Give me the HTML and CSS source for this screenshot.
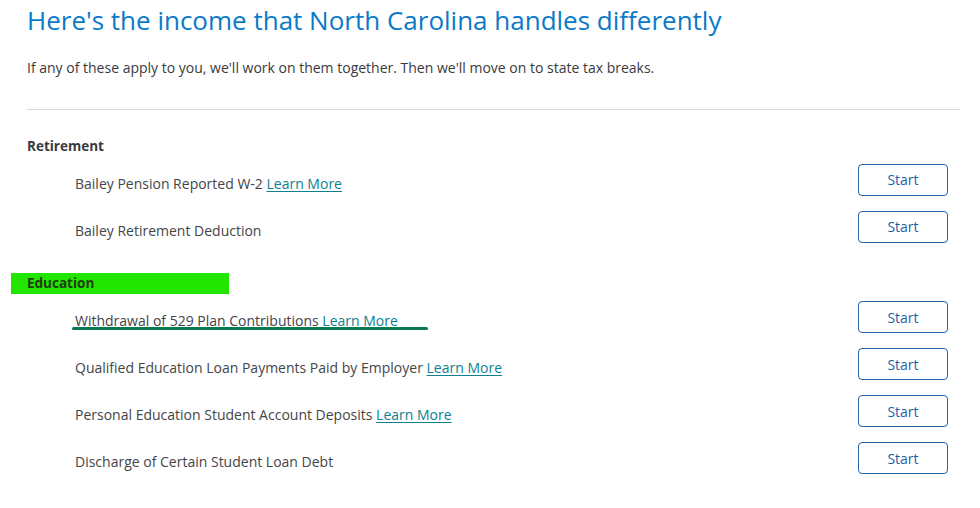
FILE: index.html
```html
<!DOCTYPE html>
<html lang="en">
<head>
<meta charset="utf-8">
<title>North Carolina income</title>
<link rel="stylesheet" href="styles.css">
</head>
<body>
<main class="page">
  <h1 class="title">Here's the income that North Carolina handles differently</h1>
  <p class="intro">If any of these apply to you, we'll work on them together. Then we'll move on to state tax breaks.</p>
  <hr class="rule">

  <section class="group">
    <h2 class="group-title">Retirement</h2>
    <div class="row">
      <span class="label">Bailey Pension Reported W-2 <a class="learn" href="#">Learn More</a></span>
      <button class="start">Start</button>
    </div>
    <div class="row">
      <span class="label">Bailey Retirement Deduction</span>
      <button class="start">Start</button>
    </div>
  </section>

  <section class="group">
    <h2 class="group-title highlight">Education</h2>
    <div class="row">
      <span class="label marked">Withdrawal of 529 Plan Contributions <a class="learn plain" href="#">Learn More</a></span>
      <button class="start">Start</button>
    </div>
    <div class="row">
      <span class="label">Qualified Education Loan Payments Paid by Employer <a class="learn" href="#">Learn More</a></span>
      <button class="start">Start</button>
    </div>
    <div class="row">
      <span class="label">Personal Education Student Account Deposits <a class="learn" href="#">Learn More</a></span>
      <button class="start">Start</button>
    </div>
    <div class="row">
      <span class="label">Discharge of Certain Student Loan Debt</span>
      <button class="start">Start</button>
    </div>
  </section>
</main>
</body>
</html>
```

FILE: styles.css
```css
html, body {
  margin: 0;
  padding: 0;
  background: #ffffff;
  overflow: hidden;
}

body {
  font-family: "Open Sans", "Liberation Sans", sans-serif;
  color: #393a3d;
}

.page {
  width: 933px;
  padding: 3px 0 0 27px;
}

.title {
  margin: 0;
  font-size: 26px;
  line-height: 34px;
  font-weight: 400;
  color: #0a7ac8;
}

.intro {
  margin: 21px 0 0;
  font-size: 14px;
  line-height: 20px;
  color: #393a3d;
}

.rule {
  margin: 31px 0 0;
  border: 0;
  border-top: 1px solid #d4d7dc;
  height: 0;
}

.group {
  margin-top: 25px;
}

.group + .group {
  margin-top: 22.5px;
}

.group-title {
  margin: 0;
  padding: 2px 0 1px;
  font-size: 13.5px;
  line-height: 18px;
  font-weight: 700;
  color: #393a3d;
}

.highlight {
  width: 202px;
  margin-left: -16px;
  padding: 1px 0 1px 16px;
  line-height: 19px;
  background: #22e500;
  color: #1f3d10;
}

.row {
  height: 47px;
  display: flex;
  align-items: center;
  justify-content: space-between;
  padding: 0 12px 0 48px;
}

.label {
  padding-top: 8px;
  font-size: 14px;
  line-height: 20px;
  color: #444549;
  position: relative;
}

.learn {
  color: #0d7f8f;
  text-decoration: underline;
  text-underline-offset: 2px;
}

.learn.plain {
  text-decoration: none;
}

.marked {
  text-decoration: underline;
  text-decoration-color: #8a8c90;
  text-decoration-thickness: 1px;
  text-underline-offset: 2px;
}

.marked::after {
  content: "";
  position: absolute;
  left: -3px;
  right: -30px;
  bottom: 1px;
  height: 3px;
  border-radius: 2px;
  background: #087a50;
}

.start {
  width: 90px;
  height: 32px;
  border: 1px solid #2463a6;
  border-radius: 4px;
  background: #ffffff;
  color: #1f5fa8;
  font-family: "Open Sans", "Liberation Sans", sans-serif;
  font-size: 14px;
  padding: 0;
  cursor: pointer;
}
```
